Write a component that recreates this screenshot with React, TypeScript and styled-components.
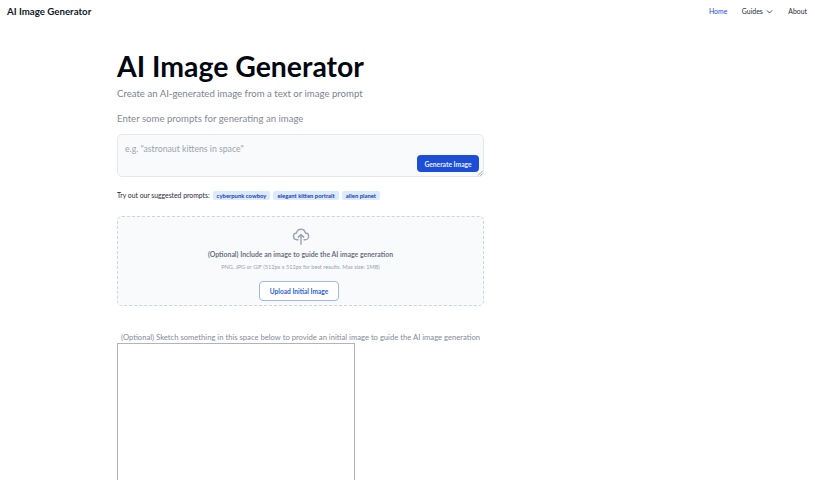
import { FC } from 'react'
import styled, { createGlobalStyle } from 'styled-components'

const GlobalStyle = createGlobalStyle`
  html, body { margin: 0; padding: 0; background: #fff; height: 480px; overflow: hidden; }
  body { font-family: 'Lato', 'Noto Sans', sans-serif; color: #111827; }
  * { box-sizing: border-box; }
`

const Nav = styled.nav`
  height: 24px;
  display: flex;
  align-items: center;
  justify-content: space-between;
  padding: 0 8px 2px 7px;
`
const Brand = styled.a`
  font-size: 9.7px;
  font-weight: 700;
  color: #111827;
`
const NavLinks = styled.div`
  display: flex;
  align-items: center;
  gap: 14.5px;
`
const NavLink = styled.a<{ $active?: boolean }>`
  display: flex;
  align-items: center;
  gap: 2px;
  font-size: 6.9px;
  color: ${(p) => (p.$active ? '#1d4ed8' : '#1f2937')};
`
const Main = styled.main`
  width: 367px;
  margin-left: 117px;
  padding-top: 23px;
`
const Title = styled.h1`
  margin: 0;
  font-size: 28.4px;
  line-height: 38px;
  font-weight: 700;
  color: #030712;
`
const Subtitle = styled.p`
  margin: 2px 0 0;
  font-size: 9.6px;
  line-height: 14px;
  color: #7d8490;
`
const PromptLabel = styled.p`
  margin: 11px 0 0;
  font-size: 9.6px;
  line-height: 14px;
  color: #858b96;
`
const PromptBox = styled.div`
  position: relative;
  margin-top: 8px;
  height: 43px;
  padding: 8px 7px;
  background: #f9fafb;
  border: 1px solid #e5e7eb;
  border-radius: 5px;
  font-size: 8.7px;
  line-height: 12px;
  color: #9ca3af;
`
const GenerateButton = styled.button`
  position: absolute;
  right: 4px;
  bottom: 4px;
  width: 62px;
  height: 17px;
  padding: 0;
  border: 0;
  border-radius: 4px;
  background: #1d4ed8;
  color: #e5edff;
  font-family: inherit;
  font-size: 6.7px;
  font-weight: 700;
`
const ResizeGrip = styled.svg`
  position: absolute;
  right: 0;
  bottom: 0;
`
const SuggestRow = styled.div`
  display: flex;
  align-items: center;
  margin-top: 13px;
  height: 10px;
  font-size: 6.8px;
  color: #1f2937;
`
const Chips = styled.div`
  display: flex;
  gap: 3px;
  margin-left: 3px;
`
const Chip = styled.span`
  padding: 0 4px;
  line-height: 9px;
  border-radius: 2px;
  background: #dbeafe;
  color: #1e40af;
  font-size: 5.9px;
  font-weight: 700;
`
const Dropzone = styled.section`
  margin-top: 16px;
  height: 90px;
  background: #f9fafb;
  border: 1px dashed #d1d5db;
  border-radius: 5px;
  display: flex;
  flex-direction: column;
  align-items: center;
  padding-top: 10px;
`
const DropTitle = styled.p`
  margin: 5px 0 0;
  font-size: 6.9px;
  line-height: 9px;
  font-weight: 700;
  color: #6b7280;
`
const DropHint = styled.p`
  margin: 4px 0 0;
  font-size: 5.6px;
  line-height: 8px;
  color: #9ca3af;
`
const UploadButton = styled.button`
  margin: 10px 3px 0 0;
  width: 80px;
  height: 20px;
  padding: 0;
  background: #fff;
  border: 1px solid #a4b8e8;
  border-radius: 4px;
  color: #2f5fd6;
  font-family: inherit;
  font-size: 6.6px;
  font-weight: 700;
`
const SketchLabel = styled.p`
  margin: 25px 0 0;
  padding-left: 4px;
  font-size: 7.65px;
  line-height: 12px;
  white-space: nowrap;
  color: #858b96;
`
const SketchPad = styled.div`
  width: 238px;
  height: 137px;
  border: 1px solid #b4b4b4;
  border-bottom: 0;
`

const App: FC = () => {
  return (
    <>
      <GlobalStyle />
      <Nav>
        <Brand>AI Image Generator</Brand>
        <NavLinks>
          <NavLink $active>Home</NavLink>
          <NavLink>
            Guides
            <svg width="9" height="9" viewBox="0 0 24 24" fill="none" stroke="#374151" strokeWidth="2.5">
              <path d="M5 9l7 7 7-7" />
            </svg>
          </NavLink>
          <NavLink>About</NavLink>
        </NavLinks>
      </Nav>
      <Main>
        <Title>AI Image Generator</Title>
        <Subtitle>Create an AI-generated image from a text or image prompt</Subtitle>
        <PromptLabel>Enter some prompts for generating an image</PromptLabel>
        <PromptBox>
          e.g. "astronaut kittens in space"
          <GenerateButton>Generate Image</GenerateButton>
          <ResizeGrip width="6" height="6" viewBox="0 0 6 6" stroke="#6b7280" strokeWidth="0.6">
            <path d="M1 5.5L5.5 1M3.5 5.5L5.5 3.5" />
          </ResizeGrip>
        </PromptBox>
        <SuggestRow>
          Try out our suggested prompts:
          <Chips>
            <Chip>cyberpunk cowboy</Chip>
            <Chip>elegant kitten portrait</Chip>
            <Chip>alien planet</Chip>
          </Chips>
        </SuggestRow>
        <Dropzone>
          <svg width="18" height="18" viewBox="0 0 24 24" fill="none" stroke="#9ca3af" strokeWidth="1.9" strokeLinecap="round" strokeLinejoin="round">
            <path d="M8 17H6.5A4.5 4.5 0 0 1 6 8.03 6 6 0 0 1 17.8 8 4.5 4.5 0 0 1 17.5 17H16" />
            <path d="M12 23V10M8.5 13.5L12 10l3.5 3.5" />
          </svg>
          <DropTitle>(Optional) Include an image to guide the AI image generation</DropTitle>
          <DropHint>PNG, JPG or GIF (512px x 512px for best results. Max size: 1MB)</DropHint>
          <UploadButton>Upload Initial Image</UploadButton>
        </Dropzone>
        <SketchLabel>(Optional) Sketch something in this space below to provide an initial image to guide the AI image generation</SketchLabel>
        <SketchPad />
      </Main>
    </>
  )
}

export default App
